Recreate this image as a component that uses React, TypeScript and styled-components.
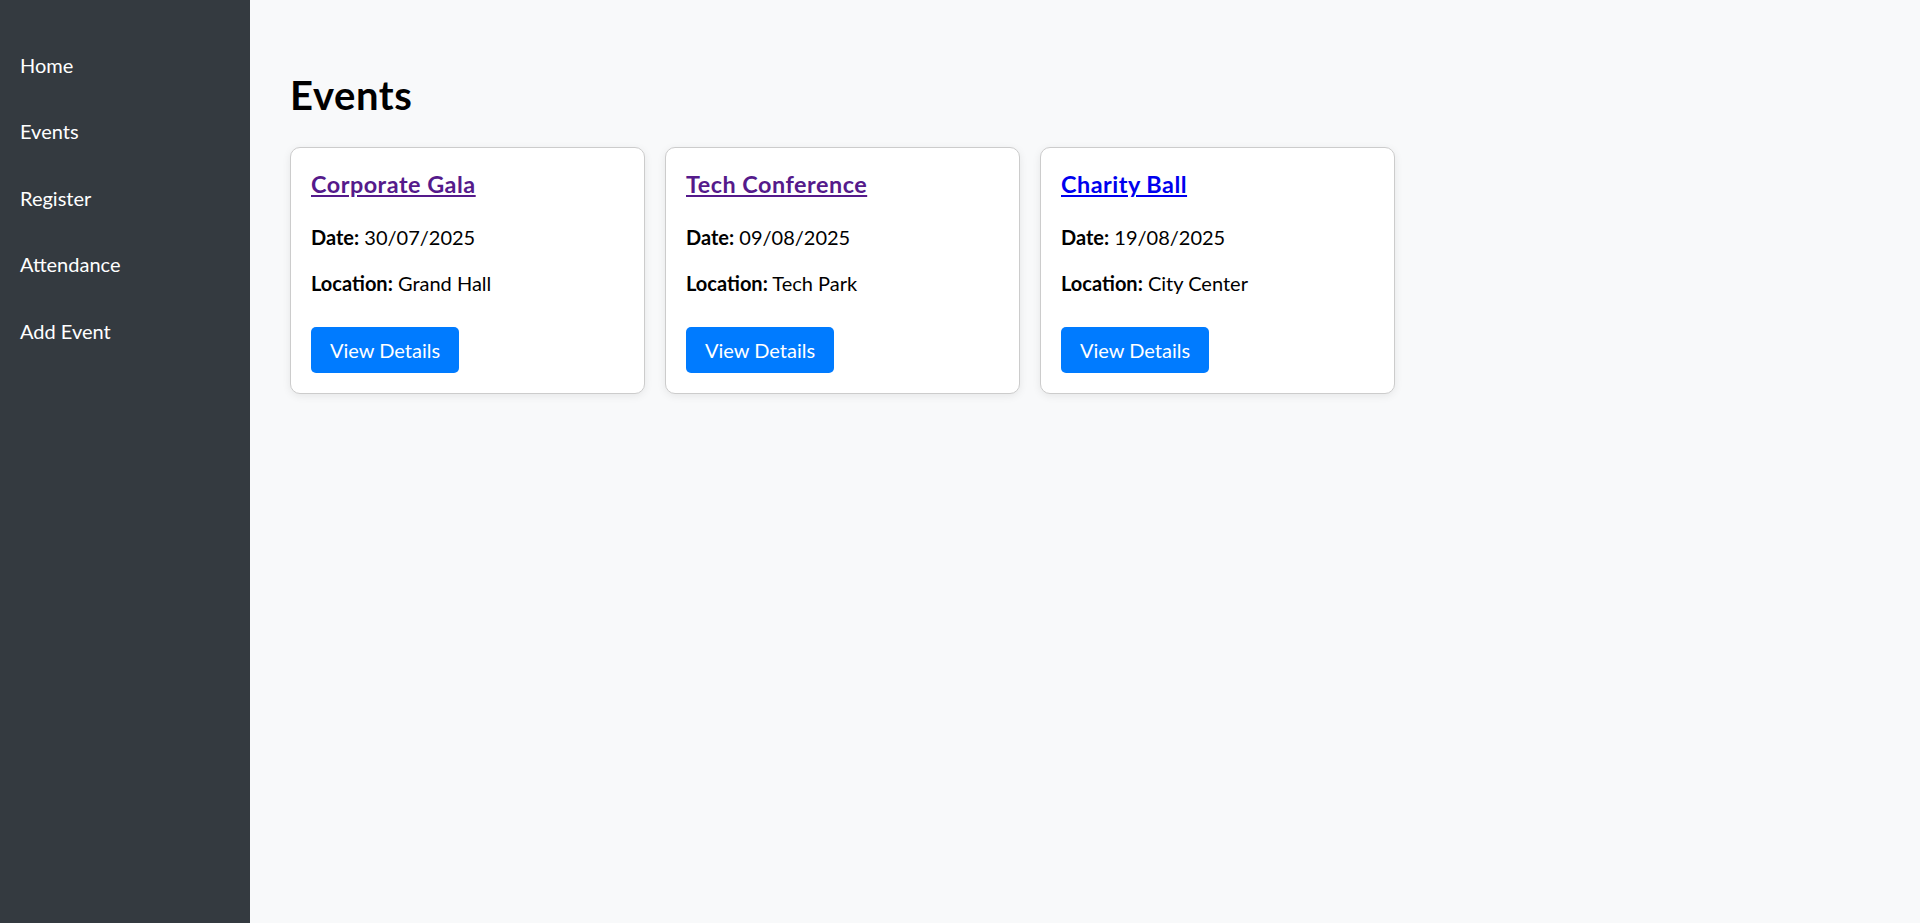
import React from "react";
import styled, { createGlobalStyle } from "styled-components";

const GlobalStyle = createGlobalStyle`
  html, body {
    margin: 0;
    padding: 0;
  }
  body {
    font-family: Lato, "Open Sans", sans-serif;
    background: #f8f9fa;
  }
  * { box-sizing: border-box; }
`;

const Layout = styled.div`
  display: flex;
  min-height: 923px;
`;

const Sidebar = styled.nav`
  width: 250px;
  flex-shrink: 0;
  background: #343a40;
  padding-top: 31.5px;
  display: flex;
  flex-direction: column;
`;

const NavLink = styled.a`
  display: block;
  color: #ffffff;
  text-decoration: none;
  font-size: 20px;
  line-height: 26.6px;
  padding: 20px 20px;
`;

const Main = styled.main`
  flex: 1;
  padding: 0 40px 40px;
  background: #f8f9fa;
`;

const Title = styled.h1`
  font-size: 40px;
  line-height: 53.3px;
  font-weight: 700;
  letter-spacing: 0.6px;
  margin: 69px 0 24.6px;
  color: #000;
`;

const CardRow = styled.div`
  display: flex;
  flex-wrap: wrap;
  gap: 20px;
`;

const Card = styled.div`
  width: 355px;
  background: #fff;
  border: 1px solid #ccc;
  border-radius: 10px;
  padding: 21.3px 20px 20px;
  box-shadow: 0 2px 8px rgba(0, 0, 0, 0.08);
`;

const CardTitle = styled.h3`
  margin: 0 0 23.4px;
  font-size: 23.4px;
  line-height: 31.1px;
  font-weight: 700;
  letter-spacing: 0.5px;
`;

const TitleLink = styled.a<{ $visited?: boolean }>`
  color: ${(p) => (p.$visited ? "#551a8b" : "#0000ee")};
  text-decoration: underline;
`;

const Info = styled.p`
  margin: 0 0 20px;
  font-size: 20px;
  line-height: 26.6px;
  color: #000;
`;

const Button = styled.button`
  margin-top: 10px;
  display: inline-block;
  background: #007bff;
  color: #fff;
  border: none;
  border-radius: 5px;
  font-family: inherit;
  font-size: 20px;
  line-height: 26.6px;
  padding: 10px 19px;
  cursor: pointer;
`;

const events = [
  { name: "Corporate Gala", date: "30/07/2025", location: "Grand Hall", visited: true },
  { name: "Tech Conference", date: "09/08/2025", location: "Tech Park", visited: true },
  { name: "Charity Ball", date: "19/08/2025", location: "City Center", visited: false },
];

export default function App() {
  return (
    <>
      <GlobalStyle />
      <Layout>
        <Sidebar>
          <NavLink href="#">Home</NavLink>
          <NavLink href="#">Events</NavLink>
          <NavLink href="#">Register</NavLink>
          <NavLink href="#">Attendance</NavLink>
          <NavLink href="#">Add Event</NavLink>
        </Sidebar>
        <Main>
          <Title>Events</Title>
          <CardRow>
            {events.map((e) => (
              <Card key={e.name}>
                <CardTitle>
                  <TitleLink href="#" $visited={e.visited}>{e.name}</TitleLink>
                </CardTitle>
                <Info><strong>Date:</strong> {e.date}</Info>
                <Info><strong>Location:</strong> {e.location}</Info>
                <Button>View Details</Button>
              </Card>
            ))}
          </CardRow>
        </Main>
      </Layout>
    </>
  );
}
